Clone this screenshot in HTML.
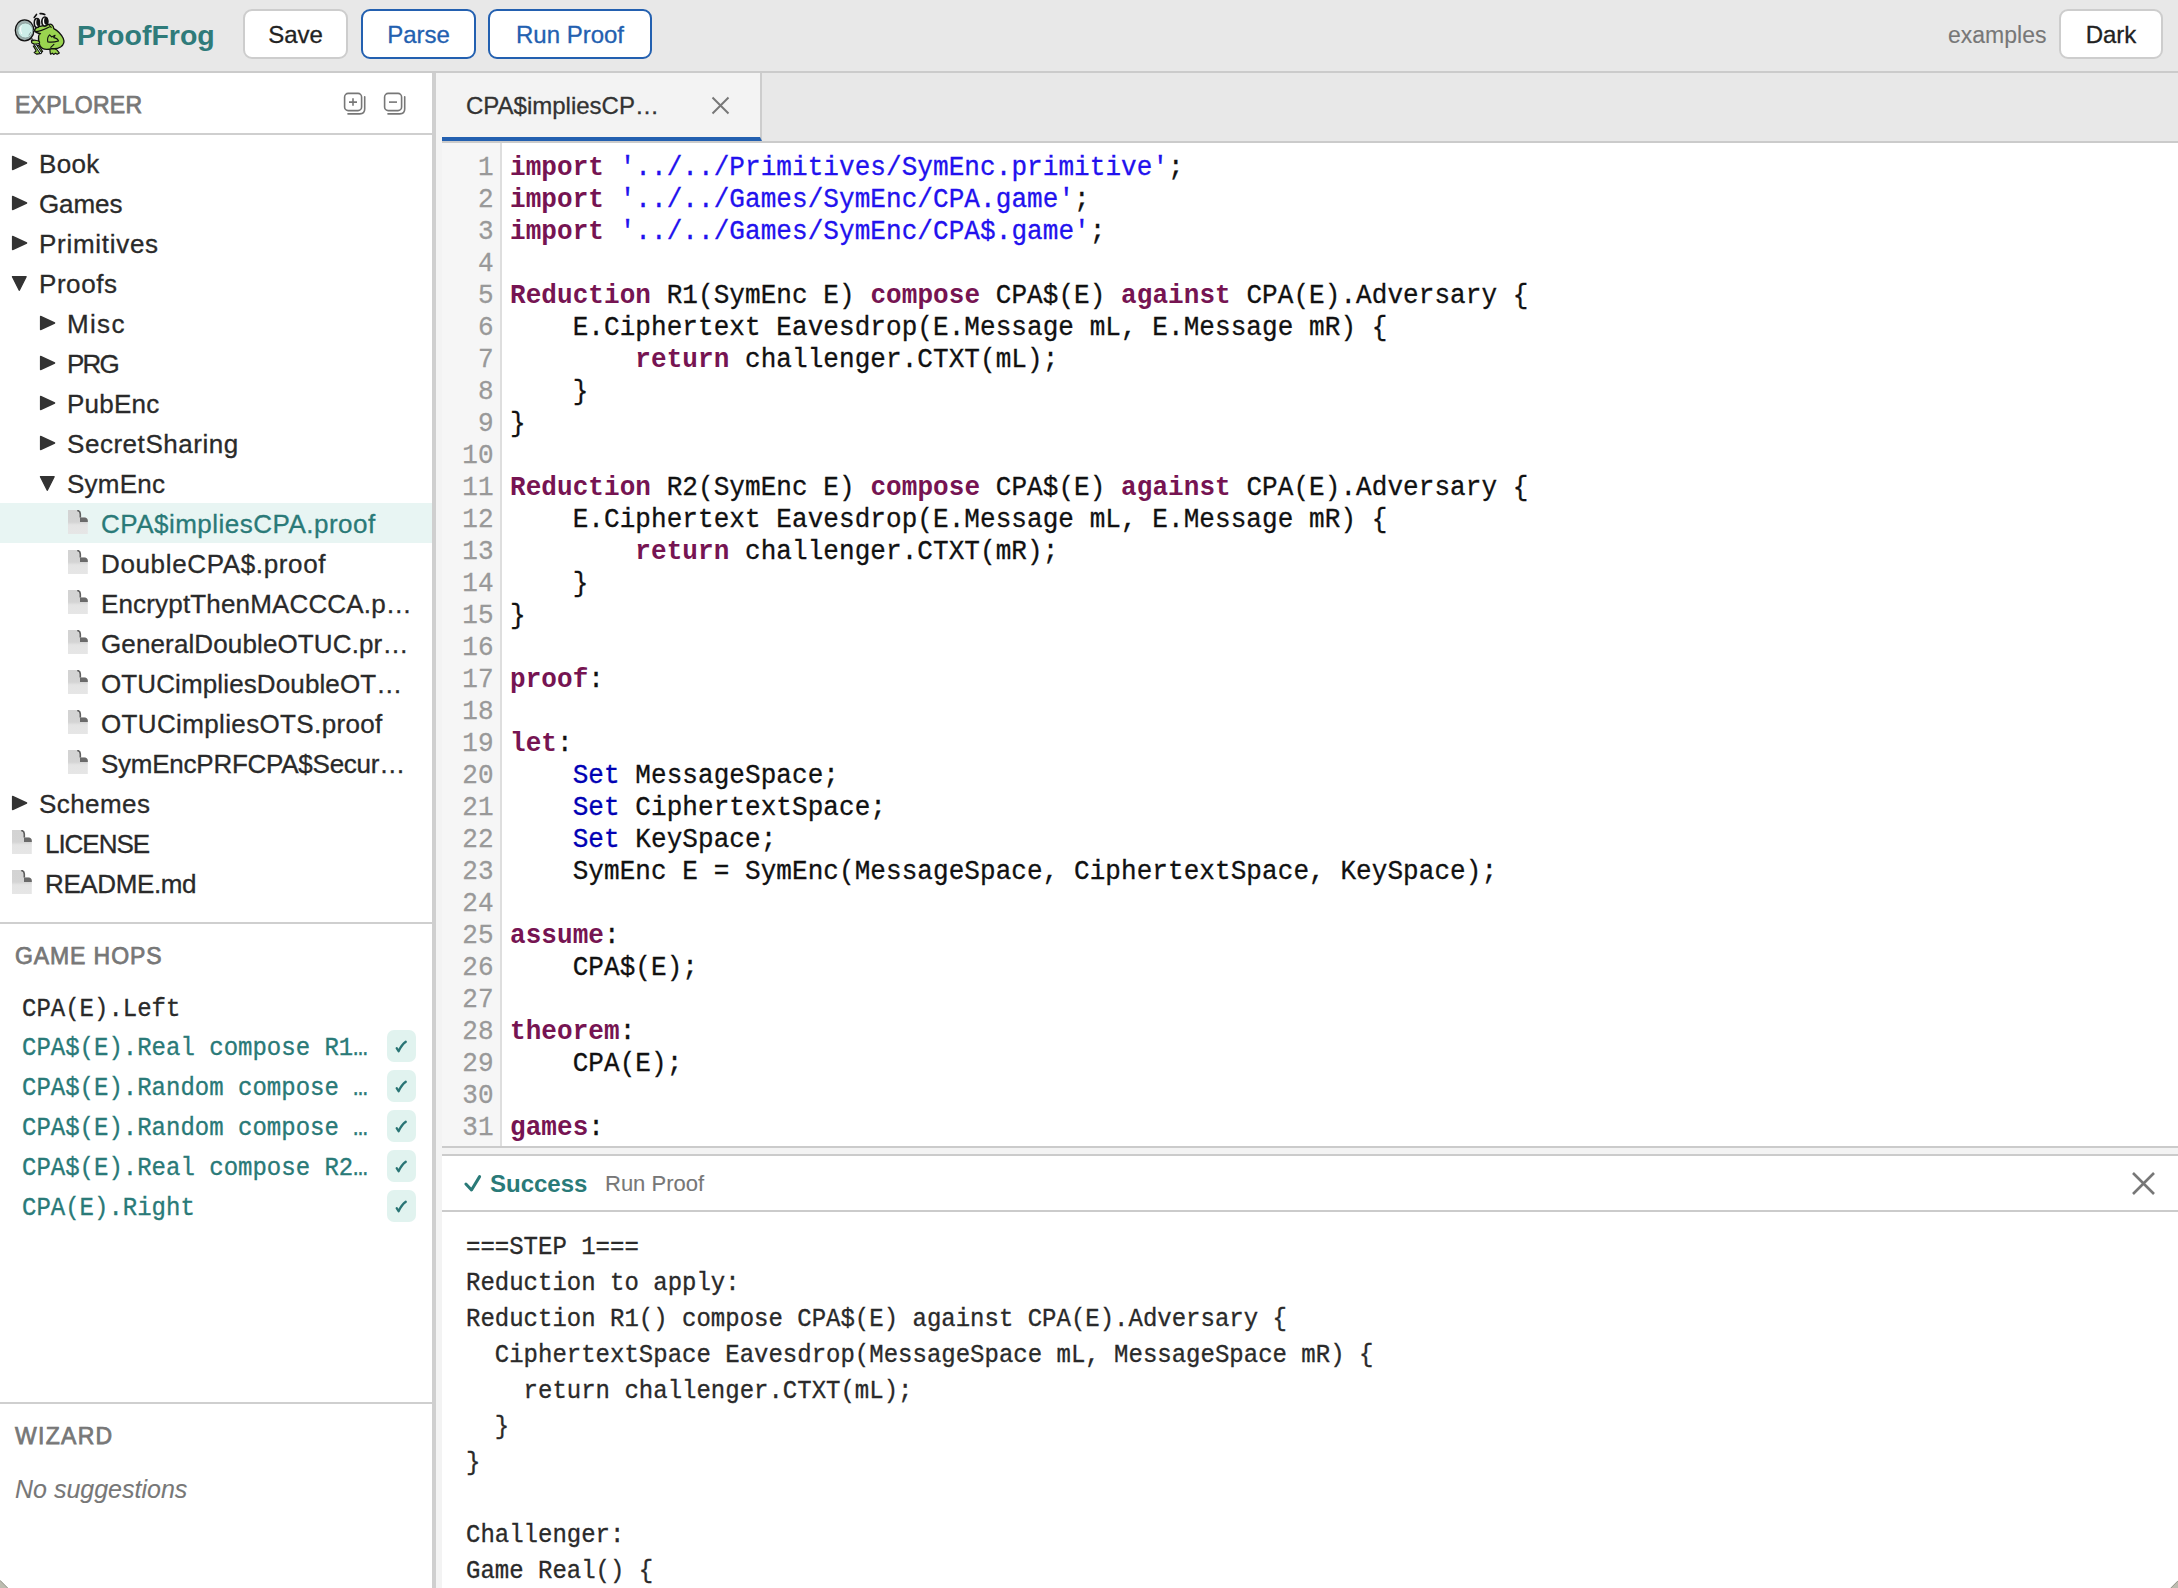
<!DOCTYPE html>
<html><head><meta charset="utf-8"><style>
*{box-sizing:border-box;margin:0;padding:0}
html,body{width:2178px;height:1588px;overflow:hidden;background:#fff;font-family:"Liberation Sans",sans-serif;color:#333;-webkit-text-stroke-width:0.3px}
.abs{position:absolute}
#hdr{position:absolute;left:0;top:0;width:2178px;height:73px;background:#e8e8e8;border-bottom:2px solid #cbcbcb}
.brand{-webkit-text-stroke-width:0;position:absolute;left:77px;top:15px;font-size:28.5px;line-height:40px;font-weight:bold;color:#2f7b7a;white-space:nowrap}
.btn{position:absolute;top:9px;height:50px;background:#fff;border:2px solid #cdcdcd;border-radius:9px;font-size:24px;line-height:47px;text-align:center;color:#222;white-space:nowrap}
.btn.blue{border-color:#2360b0;color:#2360b0}
.examples{-webkit-text-stroke-width:0.1px;position:absolute;left:1948px;top:15px;font-size:23px;line-height:40px;color:#777;white-space:nowrap}
#side{position:absolute;left:0;top:73px;width:432px;height:1515px;background:#fff}
#vsplit{position:absolute;left:432px;top:73px;width:4px;height:1515px;background:#cfcfcf}
#vstrip{position:absolute;left:436px;top:73px;width:6px;height:1515px;background:#f3f3f3}
.sechdr{-webkit-text-stroke-width:0.75px;position:absolute;left:15px;font-size:23px;font-weight:normal;letter-spacing:0.9px;color:#777;line-height:30px;white-space:nowrap}
.hline{position:absolute;left:0;width:432px;height:2px;background:#cfcfcf}
.row{position:absolute;left:0;width:432px;height:40px;font-size:26px;line-height:40px;white-space:nowrap;color:#2a2a2a}
.row span{position:absolute;top:1px}
.row.sel{background:#e8f5f3;color:#2a7a78}
.tri{position:absolute;width:0;height:0}
.tri.r{top:13px;border-top:7.5px solid transparent;border-bottom:7.5px solid transparent;border-left:15px solid #333}
.tri.d{top:14px;border-left:7.5px solid transparent;border-right:7.5px solid transparent;border-top:15px solid #333}
.fic{position:absolute;top:7px;width:20px;height:24px}
.hop{position:absolute;left:22px;-webkit-text-stroke-width:0.3px;height:37.04px;transform:scaleY(1.08);transform-origin:0 0;font-family:"Liberation Mono",monospace;font-size:24px;line-height:37.04px;white-space:pre;color:#2a7a78}
.chk{position:absolute;left:387px;width:29px;height:32px;background:#e1f3ef;border-radius:7px}
#tabbar{position:absolute;left:442px;top:73px;width:1736px;height:70px;background:#e8e8e8;border-bottom:2px solid #cbcbcb}
#tab{position:absolute;left:442px;top:73px;width:320px;height:68px;background:#f3f3f3;border-right:2px solid #cdcdcd;border-bottom:4px solid #2360b0}
#tabline{position:absolute;left:442px;top:137px;width:319px;height:4px;background:#2360b0}
.tabtxt{position:absolute;left:466px;top:86px;font-size:24px;line-height:40px;color:#333;white-space:nowrap}
#gutter{position:absolute;left:442px;top:143px;width:60px;height:1003px;background:#f6f6f6;border-right:2px solid #dedede}
.code{position:absolute;left:510px;top:152px;transform:scaleY(1.0666667);transform-origin:0 0;letter-spacing:0.065px;font-family:"Liberation Mono",monospace;font-size:26px;line-height:30px;white-space:pre;color:#111;-webkit-text-stroke-width:0.3px}
.ln{position:absolute;left:442px;top:152px;-webkit-text-stroke-width:0.25px;transform:scaleY(1.0666667);transform-origin:0 0;width:51.5px;text-align:right;font-family:"Liberation Mono",monospace;font-size:26px;line-height:30px;color:#999;white-space:pre}
.k{color:#761452;font-weight:bold;-webkit-text-stroke:0}
.s{color:#2211ee}
.t{color:#0000b4}
.hl2{position:absolute;left:442px;width:1736px;height:2px;background:#cbcbcb}
#ostrip{position:absolute;left:442px;top:1148px;width:1736px;height:6px;background:#f3f3f3}
.outtxt{position:absolute;left:466px;top:1229px;-webkit-text-stroke-width:0.3px;transform:scaleY(1.0909091);transform-origin:0 0;font-family:"Liberation Mono",monospace;font-size:24px;line-height:33px;white-space:pre;color:#2a2a2a}
.succ{-webkit-text-stroke-width:0;position:absolute;left:490px;top:1164px;font-size:24px;line-height:40px;font-weight:bold;color:#2a7a78;white-space:nowrap}
.runp{-webkit-text-stroke-width:0.1px;position:absolute;left:605px;top:1164px;font-size:22px;line-height:40px;color:#777;white-space:nowrap}
</style></head><body>
<div id="hdr"></div>
<svg class="abs" style="left:10px;top:8px" width="60" height="52" viewBox="10 8 60 52">
<g stroke="#111" stroke-linejoin="round" stroke-linecap="round">
<path d="M33.3 46 C34.5 48 36.3 50 36 51.3 L34.2 52.6 L36.8 54.2 L39.8 53.6 L42.6 51.6 C41.2 49 39.8 47 38.6 45.4 Z" fill="#9ad44f" stroke-width="1.2"/>
<path d="M49.6 48.6 C50.4 51 49.8 53 50.6 54.2 L52.4 53.2 L53.6 54.4 L55.5 53.2 L57.2 54.2 L59.3 53 C58.2 50.8 56.5 49 54.2 48.2 Z" fill="#9ad44f" stroke-width="1.2"/>
<path d="M34.4 30.4 C35.5 28 37.5 26.6 40 26.4 L48.5 24.5 C51.5 23.3 53.5 25.5 53.8 28.6 C57.5 30.5 61 34 63.2 38.3 C64.6 41.5 63.6 45 60.6 47 C58 48.6 55 49 52 48.6 C47 50 42.2 49.5 40.2 46.2 C38.6 43.2 38.3 39.2 38.6 36.2 C38.8 34.5 39.5 33.8 40.5 33.6 C37.8 33.4 35.6 32.4 34.4 30.4 Z" fill="#9ad44f" stroke-width="1.3"/>
<path d="M34.9 31.6 C38.5 31.6 43.5 30 50.2 26.4 M49.4 25.6 L51.2 27.3" fill="none" stroke-width="1.1"/>
<path d="M47.8 41.9 C47.2 39 48.2 36.2 49.6 34.9 L51.6 36.9 L55.1 35.3 L53.7 37.6 C56 38 58 39.4 58.5 41 C55 42.1 51 42.4 47.8 41.9 Z" fill="#9ad44f" stroke-width="1.1"/>
<path d="M50.8 47.4 L53.9 44.3" fill="none" stroke-width="1.1"/>
<ellipse cx="36.9" cy="23" rx="2.6" ry="4.5" fill="#fff" stroke-width="1.6"/>
<ellipse cx="38" cy="22.3" rx="1.7" ry="3.6" fill="#111" stroke="none"/>
<ellipse cx="44.85" cy="21.6" rx="3" ry="4.6" fill="#fff" stroke-width="1.7"/>
<ellipse cx="46.1" cy="20.8" rx="2" ry="3.9" fill="#111" stroke="none"/>
<path d="M34.2 17.5 L36.5 14.4" stroke-width="1.6"/>
<path d="M40.2 13.6 Q42.6 13.3 44.7 14.5" stroke-width="1.8"/>
<path d="M31.9 39.6 L40.7 52.8" stroke="#111" stroke-width="2.6"/>
<path d="M31.9 39.6 L40.7 52.8" stroke="#d5eeee" stroke-width="1.0"/>
<path d="M31.4 41.6 C32.4 40.1 35 40 36.6 40.5 C38.6 40.6 39.9 41.6 39.6 43 C38.6 44.1 36 44.1 34 43.9 C32.5 43.7 31.4 42.9 31.4 41.6 Z" fill="#9ad44f" stroke-width="1.1"/>
<ellipse cx="24.6" cy="30.3" rx="9.3" ry="10.5" fill="#9fb0ae" stroke-width="1.3"/>
<ellipse cx="25.3" cy="30.5" rx="7.5" ry="7.5" fill="#cdeee8" stroke="#7d8f8d" stroke-width="0.7"/>
<path d="M21.2 26 C20.2 28.5 20.4 31.5 21.6 33.6" fill="none" stroke="#fff" stroke-width="1"/>
<path d="M30.5 32.5 L29 35.2" fill="none" stroke="#6e7e7c" stroke-width="0.7"/>
</g></svg>
<div class="brand">ProofFrog</div>
<div class="btn" style="left:243px;width:105px">Save</div>
<div class="btn blue" style="left:361px;width:115px">Parse</div>
<div class="btn blue" style="left:488px;width:164px">Run Proof</div>
<div class="examples">examples</div>
<div class="btn" style="left:2059px;width:104px">Dark</div>
<div id="side"></div><div id="vsplit"></div><div id="vstrip"></div>
<div class="sechdr" style="top:90px;letter-spacing:0.25px">EXPLORER</div>
<svg class="abs" style="left:341px;top:91px" width="26" height="26" viewBox="0 0 26 26" fill="none" stroke="#777" stroke-width="1.6"><rect x="3.6" y="2.4" width="17" height="17.2" rx="3.6"/><path d="M23.7 5.8 V18 Q23.7 22.9 18.8 22.9 H7" stroke-linecap="round"/><path d="M8 11.1 H16 M12 7.2 V14.8"/></svg>
<svg class="abs" style="left:381px;top:91px" width="26" height="26" viewBox="0 0 26 26" fill="none" stroke="#777" stroke-width="1.6"><rect x="3.6" y="2.4" width="17" height="17.2" rx="3.6"/><path d="M23.7 5.8 V18 Q23.7 22.9 18.8 22.9 H7" stroke-linecap="round"/><path d="M8 11.1 H16"/></svg>
<div class="hline" style="top:133px"></div>
<div class="row" style="top:143px"><svg class="abs" style="left:11px;top:12px" width="17" height="17" viewBox="0 0 17 17"><path d="M1.6 1.5 L15.6 8 L1.6 14.5 Z" fill="#333" stroke="#333" stroke-width="1.4" stroke-linejoin="round"/></svg><span style="left:39px;letter-spacing:0.3px">Book</span></div>
<div class="row" style="top:183px"><svg class="abs" style="left:11px;top:12px" width="17" height="17" viewBox="0 0 17 17"><path d="M1.6 1.5 L15.6 8 L1.6 14.5 Z" fill="#333" stroke="#333" stroke-width="1.4" stroke-linejoin="round"/></svg><span style="left:39px;letter-spacing:-0.1px">Games</span></div>
<div class="row" style="top:223px"><svg class="abs" style="left:11px;top:12px" width="17" height="17" viewBox="0 0 17 17"><path d="M1.6 1.5 L15.6 8 L1.6 14.5 Z" fill="#333" stroke="#333" stroke-width="1.4" stroke-linejoin="round"/></svg><span style="left:39px;letter-spacing:0.71px">Primitives</span></div>
<div class="row" style="top:263px"><svg class="abs" style="left:11px;top:12px" width="17" height="17" viewBox="0 0 17 17"><path d="M1.5 1.7 L15.1 1.7 L8.3 15.2 Z" fill="#333" stroke="#333" stroke-width="1.4" stroke-linejoin="round"/></svg><span style="left:39px;letter-spacing:0.56px">Proofs</span></div>
<div class="row" style="top:303px"><svg class="abs" style="left:39px;top:12px" width="17" height="17" viewBox="0 0 17 17"><path d="M1.6 1.5 L15.6 8 L1.6 14.5 Z" fill="#333" stroke="#333" stroke-width="1.4" stroke-linejoin="round"/></svg><span style="left:67px;letter-spacing:1.33px">Misc</span></div>
<div class="row" style="top:343px"><svg class="abs" style="left:39px;top:12px" width="17" height="17" viewBox="0 0 17 17"><path d="M1.6 1.5 L15.6 8 L1.6 14.5 Z" fill="#333" stroke="#333" stroke-width="1.4" stroke-linejoin="round"/></svg><span style="left:67px;letter-spacing:-1.85px">PRG</span></div>
<div class="row" style="top:383px"><svg class="abs" style="left:39px;top:12px" width="17" height="17" viewBox="0 0 17 17"><path d="M1.6 1.5 L15.6 8 L1.6 14.5 Z" fill="#333" stroke="#333" stroke-width="1.4" stroke-linejoin="round"/></svg><span style="left:67px;letter-spacing:0.24px">PubEnc</span></div>
<div class="row" style="top:423px"><svg class="abs" style="left:39px;top:12px" width="17" height="17" viewBox="0 0 17 17"><path d="M1.6 1.5 L15.6 8 L1.6 14.5 Z" fill="#333" stroke="#333" stroke-width="1.4" stroke-linejoin="round"/></svg><span style="left:67px;letter-spacing:0.54px">SecretSharing</span></div>
<div class="row" style="top:463px"><svg class="abs" style="left:39px;top:12px" width="17" height="17" viewBox="0 0 17 17"><path d="M1.5 1.7 L15.1 1.7 L8.3 15.2 Z" fill="#333" stroke="#333" stroke-width="1.4" stroke-linejoin="round"/></svg><span style="left:67px;letter-spacing:0.22px">SymEnc</span></div>
<div class="row sel" style="top:503px"><svg class="fic" style="left:68px" width="20" height="24" viewBox="0 0 20 24"><defs><linearGradient id="fg" x1="0" y1="0" x2="0" y2="1"><stop offset="0" stop-color="#d3d3d3"/><stop offset="0.5" stop-color="#d4d4d4"/><stop offset="0.62" stop-color="#e4e4e4"/><stop offset="1" stop-color="#e6e6e6"/></linearGradient></defs><path d="M0 0 H9.2 Q12.3 0.3 12.3 4 V7.4 H16.5 Q19.8 7.6 19.8 11 V24 H0 Z" fill="url(#fg)"/><path d="M12 7.4 H16.5 Q19.8 7.6 19.8 11 V12 H12 Z" fill="#6a6a6a"/><path d="M9.2 0.5 Q12.3 0.7 12.3 4 V7.4" fill="none" stroke="#5e5e5e" stroke-width="1.6"/></svg><span style="left:101px;letter-spacing:0.49px">CPA$impliesCPA.proof</span></div>
<div class="row" style="top:543px"><svg class="fic" style="left:68px" width="20" height="24" viewBox="0 0 20 24"><defs><linearGradient id="fg" x1="0" y1="0" x2="0" y2="1"><stop offset="0" stop-color="#d3d3d3"/><stop offset="0.5" stop-color="#d4d4d4"/><stop offset="0.62" stop-color="#e4e4e4"/><stop offset="1" stop-color="#e6e6e6"/></linearGradient></defs><path d="M0 0 H9.2 Q12.3 0.3 12.3 4 V7.4 H16.5 Q19.8 7.6 19.8 11 V24 H0 Z" fill="url(#fg)"/><path d="M12 7.4 H16.5 Q19.8 7.6 19.8 11 V12 H12 Z" fill="#6a6a6a"/><path d="M9.2 0.5 Q12.3 0.7 12.3 4 V7.4" fill="none" stroke="#5e5e5e" stroke-width="1.6"/></svg><span style="left:101px;letter-spacing:0.64px">DoubleCPA$.proof</span></div>
<div class="row" style="top:583px"><svg class="fic" style="left:68px" width="20" height="24" viewBox="0 0 20 24"><defs><linearGradient id="fg" x1="0" y1="0" x2="0" y2="1"><stop offset="0" stop-color="#d3d3d3"/><stop offset="0.5" stop-color="#d4d4d4"/><stop offset="0.62" stop-color="#e4e4e4"/><stop offset="1" stop-color="#e6e6e6"/></linearGradient></defs><path d="M0 0 H9.2 Q12.3 0.3 12.3 4 V7.4 H16.5 Q19.8 7.6 19.8 11 V24 H0 Z" fill="url(#fg)"/><path d="M12 7.4 H16.5 Q19.8 7.6 19.8 11 V12 H12 Z" fill="#6a6a6a"/><path d="M9.2 0.5 Q12.3 0.7 12.3 4 V7.4" fill="none" stroke="#5e5e5e" stroke-width="1.6"/></svg><span style="left:101px;letter-spacing:0.16px">EncryptThenMACCCA.p…</span></div>
<div class="row" style="top:623px"><svg class="fic" style="left:68px" width="20" height="24" viewBox="0 0 20 24"><defs><linearGradient id="fg" x1="0" y1="0" x2="0" y2="1"><stop offset="0" stop-color="#d3d3d3"/><stop offset="0.5" stop-color="#d4d4d4"/><stop offset="0.62" stop-color="#e4e4e4"/><stop offset="1" stop-color="#e6e6e6"/></linearGradient></defs><path d="M0 0 H9.2 Q12.3 0.3 12.3 4 V7.4 H16.5 Q19.8 7.6 19.8 11 V24 H0 Z" fill="url(#fg)"/><path d="M12 7.4 H16.5 Q19.8 7.6 19.8 11 V12 H12 Z" fill="#6a6a6a"/><path d="M9.2 0.5 Q12.3 0.7 12.3 4 V7.4" fill="none" stroke="#5e5e5e" stroke-width="1.6"/></svg><span style="left:101px;letter-spacing:0.125px">GeneralDoubleOTUC.pr…</span></div>
<div class="row" style="top:663px"><svg class="fic" style="left:68px" width="20" height="24" viewBox="0 0 20 24"><defs><linearGradient id="fg" x1="0" y1="0" x2="0" y2="1"><stop offset="0" stop-color="#d3d3d3"/><stop offset="0.5" stop-color="#d4d4d4"/><stop offset="0.62" stop-color="#e4e4e4"/><stop offset="1" stop-color="#e6e6e6"/></linearGradient></defs><path d="M0 0 H9.2 Q12.3 0.3 12.3 4 V7.4 H16.5 Q19.8 7.6 19.8 11 V24 H0 Z" fill="url(#fg)"/><path d="M12 7.4 H16.5 Q19.8 7.6 19.8 11 V12 H12 Z" fill="#6a6a6a"/><path d="M9.2 0.5 Q12.3 0.7 12.3 4 V7.4" fill="none" stroke="#5e5e5e" stroke-width="1.6"/></svg><span style="left:101px;letter-spacing:0.116px">OTUCimpliesDoubleOT…</span></div>
<div class="row" style="top:703px"><svg class="fic" style="left:68px" width="20" height="24" viewBox="0 0 20 24"><defs><linearGradient id="fg" x1="0" y1="0" x2="0" y2="1"><stop offset="0" stop-color="#d3d3d3"/><stop offset="0.5" stop-color="#d4d4d4"/><stop offset="0.62" stop-color="#e4e4e4"/><stop offset="1" stop-color="#e6e6e6"/></linearGradient></defs><path d="M0 0 H9.2 Q12.3 0.3 12.3 4 V7.4 H16.5 Q19.8 7.6 19.8 11 V24 H0 Z" fill="url(#fg)"/><path d="M12 7.4 H16.5 Q19.8 7.6 19.8 11 V12 H12 Z" fill="#6a6a6a"/><path d="M9.2 0.5 Q12.3 0.7 12.3 4 V7.4" fill="none" stroke="#5e5e5e" stroke-width="1.6"/></svg><span style="left:101px;letter-spacing:0.36px">OTUCimpliesOTS.proof</span></div>
<div class="row" style="top:743px"><svg class="fic" style="left:68px" width="20" height="24" viewBox="0 0 20 24"><defs><linearGradient id="fg" x1="0" y1="0" x2="0" y2="1"><stop offset="0" stop-color="#d3d3d3"/><stop offset="0.5" stop-color="#d4d4d4"/><stop offset="0.62" stop-color="#e4e4e4"/><stop offset="1" stop-color="#e6e6e6"/></linearGradient></defs><path d="M0 0 H9.2 Q12.3 0.3 12.3 4 V7.4 H16.5 Q19.8 7.6 19.8 11 V24 H0 Z" fill="url(#fg)"/><path d="M12 7.4 H16.5 Q19.8 7.6 19.8 11 V12 H12 Z" fill="#6a6a6a"/><path d="M9.2 0.5 Q12.3 0.7 12.3 4 V7.4" fill="none" stroke="#5e5e5e" stroke-width="1.6"/></svg><span style="left:101px;letter-spacing:-0.25px">SymEncPRFCPA$Secur…</span></div>
<div class="row" style="top:783px"><svg class="abs" style="left:11px;top:12px" width="17" height="17" viewBox="0 0 17 17"><path d="M1.6 1.5 L15.6 8 L1.6 14.5 Z" fill="#333" stroke="#333" stroke-width="1.4" stroke-linejoin="round"/></svg><span style="left:39px;letter-spacing:0.43px">Schemes</span></div>
<div class="row" style="top:823px"><svg class="fic" style="left:12px" width="20" height="24" viewBox="0 0 20 24"><defs><linearGradient id="fg" x1="0" y1="0" x2="0" y2="1"><stop offset="0" stop-color="#d3d3d3"/><stop offset="0.5" stop-color="#d4d4d4"/><stop offset="0.62" stop-color="#e4e4e4"/><stop offset="1" stop-color="#e6e6e6"/></linearGradient></defs><path d="M0 0 H9.2 Q12.3 0.3 12.3 4 V7.4 H16.5 Q19.8 7.6 19.8 11 V24 H0 Z" fill="url(#fg)"/><path d="M12 7.4 H16.5 Q19.8 7.6 19.8 11 V12 H12 Z" fill="#6a6a6a"/><path d="M9.2 0.5 Q12.3 0.7 12.3 4 V7.4" fill="none" stroke="#5e5e5e" stroke-width="1.6"/></svg><span style="left:45px;letter-spacing:-1.03px">LICENSE</span></div>
<div class="row" style="top:863px"><svg class="fic" style="left:12px" width="20" height="24" viewBox="0 0 20 24"><defs><linearGradient id="fg" x1="0" y1="0" x2="0" y2="1"><stop offset="0" stop-color="#d3d3d3"/><stop offset="0.5" stop-color="#d4d4d4"/><stop offset="0.62" stop-color="#e4e4e4"/><stop offset="1" stop-color="#e6e6e6"/></linearGradient></defs><path d="M0 0 H9.2 Q12.3 0.3 12.3 4 V7.4 H16.5 Q19.8 7.6 19.8 11 V24 H0 Z" fill="url(#fg)"/><path d="M12 7.4 H16.5 Q19.8 7.6 19.8 11 V12 H12 Z" fill="#6a6a6a"/><path d="M9.2 0.5 Q12.3 0.7 12.3 4 V7.4" fill="none" stroke="#5e5e5e" stroke-width="1.6"/></svg><span style="left:45px;letter-spacing:-0.375px">README.md</span></div>
<div class="hline" style="top:922px"></div>
<div class="sechdr" style="top:941px">GAME HOPS</div>
<div class="hop" style="top:989px;color:#2a2a2a;">CPA(E).Left</div>
<div class="hop" style="top:1028px;">CPA$(E).Real compose R1…</div>
<div class="chk" style="top:1030px"><svg class="abs" style="left:0;top:0" width="29" height="32" viewBox="0 0 29 32"><path d="M9.7 18.2 L11.6 21.2 Q14.6 14.8 18.8 11.8" fill="none" stroke="#2a7575" stroke-width="2.3" stroke-linecap="round" stroke-linejoin="round"/></svg></div>
<div class="hop" style="top:1068px;">CPA$(E).Random compose …</div>
<div class="chk" style="top:1070px"><svg class="abs" style="left:0;top:0" width="29" height="32" viewBox="0 0 29 32"><path d="M9.7 18.2 L11.6 21.2 Q14.6 14.8 18.8 11.8" fill="none" stroke="#2a7575" stroke-width="2.3" stroke-linecap="round" stroke-linejoin="round"/></svg></div>
<div class="hop" style="top:1108px;">CPA$(E).Random compose …</div>
<div class="chk" style="top:1110px"><svg class="abs" style="left:0;top:0" width="29" height="32" viewBox="0 0 29 32"><path d="M9.7 18.2 L11.6 21.2 Q14.6 14.8 18.8 11.8" fill="none" stroke="#2a7575" stroke-width="2.3" stroke-linecap="round" stroke-linejoin="round"/></svg></div>
<div class="hop" style="top:1148px;">CPA$(E).Real compose R2…</div>
<div class="chk" style="top:1150px"><svg class="abs" style="left:0;top:0" width="29" height="32" viewBox="0 0 29 32"><path d="M9.7 18.2 L11.6 21.2 Q14.6 14.8 18.8 11.8" fill="none" stroke="#2a7575" stroke-width="2.3" stroke-linecap="round" stroke-linejoin="round"/></svg></div>
<div class="hop" style="top:1188px;">CPA(E).Right</div>
<div class="chk" style="top:1190px"><svg class="abs" style="left:0;top:0" width="29" height="32" viewBox="0 0 29 32"><path d="M9.7 18.2 L11.6 21.2 Q14.6 14.8 18.8 11.8" fill="none" stroke="#2a7575" stroke-width="2.3" stroke-linecap="round" stroke-linejoin="round"/></svg></div>
<div class="hline" style="top:1402px"></div>
<div class="sechdr" style="top:1421px;letter-spacing:1.3px">WIZARD</div>
<div class="abs" style="left:15px;top:1474px;font-size:25px;line-height:30px;font-style:italic;color:#777;-webkit-text-stroke-width:0.1px;white-space:nowrap">No suggestions</div>
<div id="tabbar"></div><div id="tab"></div>
<div class="tabtxt">CPA$impliesCP…</div>
<svg class="abs" style="left:711px;top:96px" width="19" height="19" viewBox="0 0 19 19"><path d="M1.5 1.5 L17.5 17.5 M17.5 1.5 L1.5 17.5" stroke="#777" stroke-width="2"/></svg>
<div id="gutter"></div>
<div class="ln">1
2
3
4
5
6
7
8
9
10
11
12
13
14
15
16
17
18
19
20
21
22
23
24
25
26
27
28
29
30
31</div>
<div class="code"><span class="k">import</span> <span class="s">&#x27;../../Primitives/SymEnc.primitive&#x27;</span>;
<span class="k">import</span> <span class="s">&#x27;../../Games/SymEnc/CPA.game&#x27;</span>;
<span class="k">import</span> <span class="s">&#x27;../../Games/SymEnc/CPA$.game&#x27;</span>;

<span class="k">Reduction</span> R1(SymEnc E) <span class="k">compose</span> CPA$(E) <span class="k">against</span> CPA(E).Adversary {
    E.Ciphertext Eavesdrop(E.Message mL, E.Message mR) {
        <span class="k">return</span> challenger.CTXT(mL);
    }
}

<span class="k">Reduction</span> R2(SymEnc E) <span class="k">compose</span> CPA$(E) <span class="k">against</span> CPA(E).Adversary {
    E.Ciphertext Eavesdrop(E.Message mL, E.Message mR) {
        <span class="k">return</span> challenger.CTXT(mR);
    }
}

<span class="k">proof</span>:

<span class="k">let</span>:
    <span class="t">Set</span> MessageSpace;
    <span class="t">Set</span> CiphertextSpace;
    <span class="t">Set</span> KeySpace;
    SymEnc E = SymEnc(MessageSpace, CiphertextSpace, KeySpace);

<span class="k">assume</span>:
    CPA$(E);

<span class="k">theorem</span>:
    CPA(E);

<span class="k">games</span>:</div>
<div class="hl2" style="top:1146px"></div><div id="ostrip"></div><div class="hl2" style="top:1154px"></div>
<svg class="abs" style="left:462px;top:1172px" width="22" height="22" viewBox="0 0 22 22"><path d="M3.9 12 L9.5 18 L17.6 4.6" fill="none" stroke="#2a7a78" stroke-width="3" stroke-linecap="round" stroke-linejoin="round"/></svg>
<div class="succ">Success</div><div class="runp">Run Proof</div>
<svg class="abs" style="left:2130px;top:1170px" width="27" height="27" viewBox="0 0 27 27"><path d="M3 3 L24 24 M24 3 L3 24" stroke="#777" stroke-width="2.6"/></svg>
<div class="hl2" style="top:1210px"></div>
<div class="outtxt">===STEP 1===
Reduction to apply:
Reduction R1() compose CPA$(E) against CPA(E).Adversary {
  CiphertextSpace Eavesdrop(MessageSpace mL, MessageSpace mR) {
    return challenger.CTXT(mL);
  }
}

Challenger:
Game Real() {</div>
<svg class="abs" style="left:0;top:1580px" width="8" height="8" viewBox="0 0 8 8"><path d="M0 0.3 L7.7 8 H0 Z" fill="#bdbcb0"/><path d="M0 0.3 L7.7 8" stroke="#8a8a80" stroke-width="0.9"/></svg>
<svg class="abs" style="left:2170px;top:1580px" width="8" height="8" viewBox="0 0 8 8"><path d="M8 0.8 L0.8 8 H8 Z" fill="#bdbcb0"/><path d="M8 0.8 L0.8 8" stroke="#8a8a80" stroke-width="0.9"/></svg>
</body></html>
